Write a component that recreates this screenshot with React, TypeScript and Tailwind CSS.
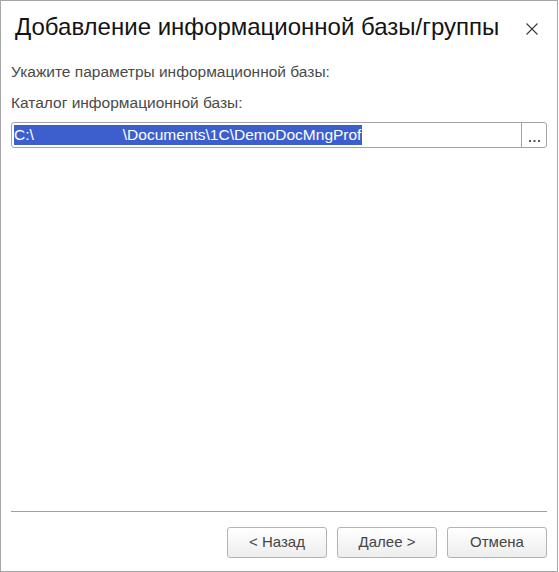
// Wizard step: choose the infobase directory
export default function App() {
  const font = { fontFamily: '"Liberation Sans", Arial, sans-serif' };

  return (
    <div className="w-[559px] h-[572px] bg-white" style={font}>
      <div className="w-[558px] h-[572px] border border-[#a6a6a6] flex flex-col">
        {/* Title bar */}
        <div className="flex items-center justify-between pl-[14px] pr-[19px] mt-[14px] h-[24px]">
          <h1 className="text-[24px] leading-none text-[#141414] font-normal">
            Добавление информационной базы/группы
          </h1>
          <svg width="12" height="12" viewBox="0 0 12 12" className="mt-[3px]">
            <path d="M0.5 0.5 L11.5 11.5 M11.5 0.5 L0.5 11.5" stroke="#3a3a3a" strokeWidth="1.1" fill="none" />
          </svg>
        </div>

        {/* Body */}
        <div className="flex-1 flex flex-col px-[10px] pt-[24px]">
          <p className="text-[15.5px] leading-[18px] text-[#4a4a4a]">Укажите параметры информационной базы:</p>
          <p className="mt-[13px] text-[15.5px] leading-[18px] text-[#4a4a4a]">Каталог информационной базы:</p>

          {/* Path field with select button */}
          <div className="mt-[10px] h-[26px] flex border border-[#a3a3a3] rounded-[3px] bg-white">
            <div className="flex-1 flex items-center pl-[2px]">
              <span className="flex bg-[#3d5fce] text-white text-[15.5px] leading-[20px] h-[20px] pr-[1px] whitespace-pre">
                <span>C:\</span>
                <span className="w-[89px]" />
                <span>\Documents\1C\DemoDocMngProf</span>
              </span>
            </div>
            <div className="w-[25px] border-l border-[#a3a3a3] flex items-end justify-center pb-[4px]">
              <svg width="11" height="3" viewBox="0 0 11 3">
                <rect x="0" y="0" width="2" height="2" fill="#5a5a5a" />
                <rect x="4.5" y="0" width="2" height="2" fill="#5a5a5a" />
                <rect x="9" y="0" width="2" height="2" fill="#5a5a5a" />
              </svg>
            </div>
          </div>

          <div className="flex-1" />

          {/* Footer */}
          <div className="border-t border-[#a0a0a0] mb-[15px]" />
          <div className="flex justify-end gap-[10px] mb-[13px]">
            {['< Назад', 'Далее >', 'Отмена'].map((t) => (
              <button
                key={t}
                className="w-[100px] h-[31px] rounded-[3px] border border-[#b3b3b3] bg-gradient-to-b from-white to-[#ededed] text-[15px] text-[#454545]"
              >
                {t}
              </button>
            ))}
          </div>
        </div>
      </div>
    </div>
  );
}
